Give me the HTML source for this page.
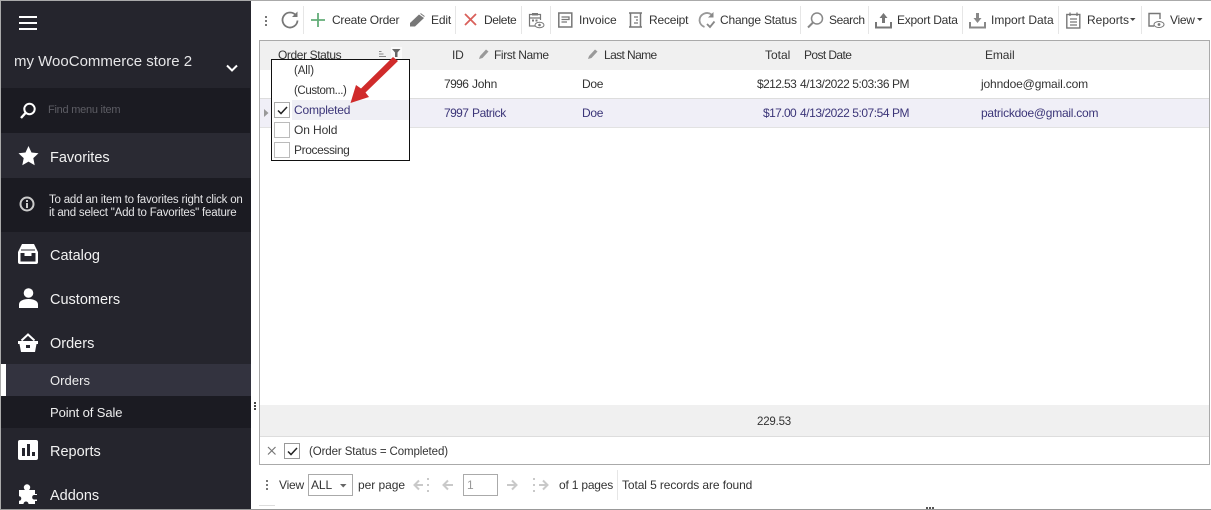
<!DOCTYPE html>
<html><head><meta charset="utf-8">
<style>
html,body{margin:0;padding:0;width:1211px;height:510px;overflow:hidden;background:#fff;font-family:"Liberation Sans",sans-serif}
#r{position:relative;width:1211px;height:510px;overflow:hidden;background:#fff}
.b{position:absolute}
.t{position:absolute;white-space:nowrap;font-size:12px;line-height:16px;color:#333;letter-spacing:-.2px}
.m{color:#f2f2f2;font-size:14.5px;line-height:20px;letter-spacing:0}
.v{color:#3b3578}
.h{letter-spacing:-.5px}
.n{letter-spacing:-.6px}
.d{letter-spacing:-.45px}
svg{position:absolute;overflow:visible}
</style></head><body><div id="r">
<!-- outer frame -->
<div class="b" style="left:0;top:0;width:1211px;height:1px;background:#aaa"></div>
<div class="b" style="left:0;top:0;width:1px;height:510px;background:#aaa"></div>
<div class="b" style="left:0;top:509px;width:1211px;height:1px;background:#999"></div>
<!-- sidebar -->
<div class="b" style="left:1px;top:1px;width:250px;height:508px;background:#25252d"></div>
<div class="b" style="left:1px;top:88px;width:249px;height:45px;background:#1b1b22"></div>
<div class="b" style="left:1px;top:133px;width:249px;height:45px;background:#2a2a33"></div>
<div class="b" style="left:1px;top:178px;width:250px;height:54px;background:#1b1b22"></div>
<div class="b" style="left:1px;top:364px;width:250px;height:32px;background:#33333f"></div>
<div class="b" style="left:1px;top:364px;width:5px;height:32px;background:#fff"></div>
<div class="b" style="left:1px;top:396px;width:250px;height:32px;background:#1b1b22"></div>
<!-- hamburger -->
<div class="b" style="left:19px;top:16px;width:18px;height:2px;background:#fff"></div>
<div class="b" style="left:19px;top:22px;width:18px;height:2px;background:#fff"></div>
<div class="b" style="left:19px;top:28px;width:18px;height:2px;background:#fff"></div>
<span class="t" style="left:14px;top:52px;font-size:15px;line-height:20px;color:#e6e6e8;letter-spacing:0">my WooCommerce store 2</span>
<svg style="left:226px;top:64px" width="12" height="9"><path d="M1 1.500L6 6.500L11 1.500" fill="none" stroke="#fff" stroke-width="2"/></svg>
<!-- search -->
<svg style="left:19px;top:101px" width="20" height="19"><circle cx="10.500" cy="8" r="5.200" fill="none" stroke="#fff" stroke-width="2"/><path d="M6.500 12L2 17" stroke="#fff" stroke-width="2.400"/></svg>
<span class="t" style="left:48px;top:102px;color:#5d5d64;font-size:11px;letter-spacing:-.25px">Find menu item</span>
<!-- favorites -->
<svg style="left:18px;top:146px" width="21" height="20"><path d="M10.500 0L13.500 6.500L20.500 7.300L15.300 12.100L16.700 19.200L10.500 15.600L4.300 19.200L5.700 12.100L.500 7.300L7.500 6.500Z" fill="#fff"/></svg>
<span class="t m" style="left:50px;top:148px">Favorites</span>
<svg style="left:19px;top:195px" width="17" height="17"><circle cx="8" cy="9" r="6.500" fill="none" stroke="#ccc" stroke-width="2"/><rect x="7" y="8" width="2" height="5" fill="#ccc"/><rect x="7" y="5" width="2" height="2" fill="#ccc"/></svg>
<span class="t" style="left:49px;top:192px;color:#e4e4e6;font-size:11.500px;letter-spacing:-.2px">To add an item to favorites right click on</span>
<span class="t" style="left:49px;top:205px;color:#e4e4e6;font-size:11.500px;letter-spacing:-.2px">it and select "Add to Favorites" feature</span>
<!-- catalog -->
<svg style="left:18px;top:244px" width="20" height="20"><path d="M4 0H16L19 6L20 8V18A2 2 0 0 1 18 20H2A2 2 0 0 1 0 18V8L1 6Z" fill="#fff"/><path d="M3 5.500H17V6.500H3Z" fill="#25252d"/><path d="M2.500 9H6.500V12H13.500V9H17.500V17.500H2.500Z" fill="#25252d"/></svg>
<span class="t m" style="left:50px;top:246px">Catalog</span>
<!-- customers -->
<svg style="left:19px;top:288px" width="19" height="20"><circle cx="9.500" cy="5" r="4.800" fill="#fff"/><path d="M0 20V16.500C0 13 4 11 9.500 11S19 13 19 16.500V20Z" fill="#fff"/></svg>
<span class="t m" style="left:50px;top:290px">Customers</span>
<!-- orders -->
<svg style="left:18px;top:333px" width="20" height="20"><path d="M3.500 7.500L10 1.500L16.500 7.500" fill="none" stroke="#fff" stroke-width="2"/><path d="M0 8H20V11H18.500L17 19H3L1.500 11H0Z" fill="#fff"/><rect x="8" y="12" width="4" height="3" fill="#25252d"/></svg>
<span class="t m" style="left:50px;top:334px">Orders</span>
<span class="t" style="left:50px;top:373px;color:#eee;font-size:13px;letter-spacing:.05px">Orders</span>
<span class="t" style="left:50px;top:405px;color:#eee;font-size:13px;letter-spacing:-.1px">Point of Sale</span>
<!-- reports -->
<svg style="left:18px;top:440px" width="20" height="20"><rect width="20" height="20" rx="2" fill="#fff"/><rect x="4" y="8" width="3" height="8" fill="#25252d"/><rect x="9" y="4" width="3" height="12" fill="#25252d"/><rect x="14" y="12" width="3" height="4" fill="#25252d"/></svg>
<span class="t m" style="left:50px;top:442px">Reports</span>
<!-- addons -->
<svg style="left:19px;top:484px" width="18" height="20"><circle cx="8" cy="3.500" r="3.200" fill="#fff"/><path d="M0 6H16V10H18V17H16V20H0Z" fill="#fff"/><path d="M18 11H15A2.300 2.300 0 0 0 15 15.500H18Z" fill="#25252d"/><circle cx="7" cy="20" r="2.500" fill="#25252d"/><circle cx="0" cy="14.500" r="2.300" fill="#25252d"/></svg>
<span class="t m" style="left:50px;top:486px">Addons</span>
<!-- splitter dots -->
<div class="b" style="left:254px;top:402px;width:2px;height:2px;background:#444;box-shadow:0 3px #444,0 6px #444"></div>
<!-- toolbar -->
<div class="b" style="left:265px;top:16px;width:2px;height:2px;background:#777;box-shadow:0 4px #777,0 8px #777"></div>
<svg style="left:281px;top:11px" width="18" height="18"><path d="M15 4.500A7.500 7.500 0 1 0 16.500 9.500" fill="none" stroke="#777" stroke-width="1.800"/><path d="M16.500 .5V6H11Z" fill="#777"/></svg>
<div class="b" style="left:303px;top:6px;width:1px;height:28px;background:#e6e6e6"></div>
<svg style="left:310px;top:12px" width="16" height="16"><path d="M8 1V15M1 8H15" stroke="#63ad78" stroke-width="1.800"/></svg>
<span class="t" style="left:332px;top:12px;letter-spacing:-.23px">Create Order</span>
<svg style="left:409px;top:12px" width="17" height="16"><path d="M1 11L10 2.500L15 6L6 14.500H1Z" fill="#777"/><path d="M11.500 1.500L15.500 4.500" stroke="#777" stroke-width="1"/></svg>
<span class="t" style="left:431px;top:12px;letter-spacing:-.15px">Edit</span>
<div class="b" style="left:455px;top:6px;width:1px;height:28px;background:#e6e6e6"></div>
<svg style="left:464px;top:13px" width="13" height="13"><path d="M1 1L12 12M12 1L1 12" stroke="#d9605a" stroke-width="1.800"/></svg>
<span class="t" style="left:484px;top:12px;letter-spacing:-.4px">Delete</span>
<div class="b" style="left:521px;top:6px;width:1px;height:28px;background:#e6e6e6"></div>
<svg style="left:528px;top:12px" width="17" height="17"><path d="M10 14H1.500V2.500H12.500V8M1.500 6H12.500" fill="none" stroke="#777" stroke-width="1.200"/><rect x="4" y="1" width="6" height="2.500" fill="#777"/><rect x="4" y="7.500" width="2" height="2" fill="#777"/><rect x="7.500" y="7.500" width="2" height="2" fill="#777"/><ellipse cx="11.500" cy="13" rx="4.500" ry="2.800" fill="#fff" stroke="#777"/><circle cx="11.500" cy="13" r="1.300" fill="#777"/></svg>
<div class="b" style="left:550px;top:6px;width:1px;height:28px;background:#e6e6e6"></div>
<svg style="left:558px;top:12px" width="15" height="16"><rect x=".8" y="1" width="13" height="14" fill="none" stroke="#777" stroke-width="1.500"/><path d="M3.500 5H11V7.500H3.500M3.500 10H9" fill="none" stroke="#777" stroke-width="1.300"/></svg>
<span class="t" style="left:579px;top:12px;letter-spacing:-.05px">Invoice</span>
<svg style="left:628px;top:12px" width="15" height="16"><path d="M1 1H14M1 15H14M2.500 1V15M12.500 1V15" fill="none" stroke="#777" stroke-width="1.500"/><path d="M6 5H10M8 8H10M6 11H10" stroke="#777" stroke-width="1.200"/></svg>
<span class="t" style="left:649px;top:12px;letter-spacing:-.2px">Receipt</span>
<svg style="left:698px;top:11px" width="18" height="18"><path d="M13.500 3.500A7.500 7.500 0 0 0 1.500 9.500A7.500 7.500 0 0 0 6.500 16" fill="none" stroke="#999" stroke-width="1.800"/><path d="M15.500 1V6.500H10Z" fill="#888"/><path d="M9 13L12 16L16.500 10.500" fill="none" stroke="#888" stroke-width="1.800"/></svg>
<span class="t" style="left:720px;top:12px;letter-spacing:-.2px">Change Status</span>
<div class="b" style="left:800px;top:6px;width:1px;height:28px;background:#e6e6e6"></div>
<svg style="left:807px;top:12px" width="17" height="17"><circle cx="10" cy="6.500" r="5.500" fill="none" stroke="#888" stroke-width="1.500"/><path d="M6 10.500L1 15.500" stroke="#888" stroke-width="2"/></svg>
<span class="t" style="left:829px;top:12px;letter-spacing:-.4px">Search</span>
<div class="b" style="left:868px;top:6px;width:1px;height:28px;background:#e6e6e6"></div>
<svg style="left:875px;top:12px" width="17" height="17"><path d="M1 10V15.500H16V10" fill="none" stroke="#777" stroke-width="2"/><path d="M8.500 1L12.500 6H10V11H7V6H4.500Z" fill="#777"/></svg>
<span class="t" style="left:897px;top:12px;letter-spacing:-.25px">Export Data</span>
<div class="b" style="left:962px;top:6px;width:1px;height:28px;background:#e6e6e6"></div>
<svg style="left:969px;top:12px" width="17" height="17"><path d="M1 10V15.500H16V10" fill="none" stroke="#888" stroke-width="2"/><path d="M8.500 11L12.500 6H10V1H7V6H4.500Z" fill="#888"/></svg>
<span class="t" style="left:991px;top:12px;letter-spacing:0">Import Data</span>
<div class="b" style="left:1058px;top:6px;width:1px;height:28px;background:#e6e6e6"></div>
<svg style="left:1066px;top:12px" width="15" height="17"><rect x=".8" y="2.500" width="13" height="13.500" fill="none" stroke="#777" stroke-width="1.400"/><path d="M4 .5V4M11 .5V4M4 7H11M4 10H11M4 13H11" stroke="#777" stroke-width="1.300"/></svg>
<span class="t" style="left:1087px;top:12px;letter-spacing:0">Reports</span>
<svg style="left:1130px;top:18px" width="6" height="4"><path d="M0 0H5.500L2.750 3Z" fill="#444"/></svg>
<div class="b" style="left:1141px;top:6px;width:1px;height:28px;background:#e6e6e6"></div>
<svg style="left:1148px;top:12px" width="17" height="17"><path d="M6 14H1V1.500H12V7" fill="none" stroke="#777" stroke-width="1.400"/><ellipse cx="11" cy="12.500" rx="5" ry="3" fill="#fff" stroke="#777"/><circle cx="11" cy="12.500" r="1.400" fill="#777"/></svg>
<span class="t" style="left:1170px;top:12px;letter-spacing:-.3px">View</span>
<svg style="left:1197px;top:18px" width="6" height="4"><path d="M0 0H5.500L2.750 3Z" fill="#444"/></svg>
<!-- grid -->
<div class="b" style="left:259px;top:40px;width:951px;height:425px;border:1px solid #aaa;box-sizing:border-box;background:#fff"></div>
<div class="b" style="left:260px;top:41px;width:949px;height:29px;background:#f0f0f0"></div>
<div class="b" style="left:260px;top:98px;width:949px;height:1px;background:#ddd"></div>
<div class="b" style="left:260px;top:99px;width:949px;height:28px;background:#f0eff7"></div>
<div class="b" style="left:260px;top:127px;width:949px;height:1px;background:#e2e2e2"></div>
<span class="t" style="left:278px;top:47px;letter-spacing:-.4px">Order Status</span>
<svg style="left:379px;top:51px" width="8" height="8"><path d="M0 .5H2.500M0 3H4.500M0 5.500H7" stroke="#888" stroke-width="1"/></svg>
<div class="b" style="left:391px;top:47px;width:11px;height:12px;background:#fafafa"></div>
<svg style="left:392px;top:49px" width="9" height="9"><path d="M0 0H8.500L5.500 3.500V8H3V3.500Z" fill="#666"/></svg>
<span class="t" style="left:452px;top:47px">ID</span>
<svg style="left:478px;top:48px" width="12" height="13"><path d="M1 11L2 8L8 1.500L10.500 3.500L4.500 10Z" fill="#999"/></svg>
<span class="t" style="left:494px;top:47px;letter-spacing:-.4px">First Name</span>
<svg style="left:587px;top:48px" width="12" height="13"><path d="M1 11L2 8L8 1.500L10.500 3.500L4.500 10Z" fill="#999"/></svg>
<span class="t h" style="left:604px;top:47px;letter-spacing:-.6px">Last Name</span>
<span class="t" style="left:765px;top:47px;letter-spacing:0">Total</span>
<span class="t h" style="left:804px;top:47px;letter-spacing:-.6px">Post Date</span>
<span class="t" style="left:985px;top:47px;letter-spacing:-.1px">Email</span>
<span class="t n" style="left:444px;top:76px">7996</span>
<span class="t" style="left:472px;top:76px;letter-spacing:-.25px">John</span>
<span class="t" style="left:582px;top:76px;letter-spacing:-.3px">Doe</span>
<span class="t n" style="left:757px;top:76px">$212.53</span>
<span class="t d" style="left:800px;top:76px">4/13/2022 5:03:36 PM</span>
<span class="t" style="left:981px;top:76px;letter-spacing:-.15px">johndoe@gmail.com</span>
<svg style="left:264px;top:109px" width="5" height="8"><path d="M0 0L4.500 4L0 8Z" fill="#999"/></svg>
<span class="t v n" style="left:444px;top:105px">7997</span>
<span class="t v" style="left:472px;top:105px;letter-spacing:-.4px">Patrick</span>
<span class="t v" style="left:582px;top:105px;letter-spacing:-.3px">Doe</span>
<span class="t v n" style="left:763px;top:105px">$17.00</span>
<span class="t v d" style="left:800px;top:105px">4/13/2022 5:07:54 PM</span>
<span class="t v" style="left:981px;top:105px;letter-spacing:-.25px">patrickdoe@gmail.com</span>
<!-- dropdown -->
<div class="b" style="left:271px;top:59px;width:139px;height:102px;box-sizing:border-box;border:1px solid #111;background:#fff"></div>
<div class="b" style="left:292px;top:100px;width:117px;height:20px;background:#efeff5"></div>
<span class="t" style="left:294px;top:63px;font-size:11.500px;letter-spacing:-.1px">(All)</span>
<span class="t" style="left:294px;top:83px;font-size:11.500px;letter-spacing:-.4px">(Custom...)</span>
<div class="b" style="left:274px;top:102px;width:16px;height:16px;box-sizing:border-box;border:1px solid #aaa;background:#fff"></div>
<svg style="left:277px;top:106px" width="11" height="9"><path d="M1 4.500L4 7.500L10 1" fill="none" stroke="#222" stroke-width="1.500"/></svg>
<span class="t v" style="left:294px;top:102px;letter-spacing:-.2px">Completed</span>
<div class="b" style="left:274px;top:122px;width:16px;height:16px;box-sizing:border-box;border:1px solid #bbb;background:#fff"></div>
<span class="t" style="left:294px;top:122px;letter-spacing:-.1px">On Hold</span>
<div class="b" style="left:274px;top:142px;width:16px;height:16px;box-sizing:border-box;border:1px solid #bbb;background:#fff"></div>
<span class="t" style="left:294px;top:142px;letter-spacing:-.4px">Processing</span>
<!-- arrow -->
<svg style="left:350px;top:55px" width="50" height="50"><path d="M43 2L48 6L15.500 37.500L19 42L.5 48L6 30L11 33.500Z" fill="#d02b2b"/></svg>
<!-- footer -->
<div class="b" style="left:260px;top:405px;width:949px;height:31px;background:#f0f0f0"></div>
<div class="b" style="left:260px;top:436px;width:949px;height:1px;background:#ddd"></div>
<span class="t" style="left:757px;top:414px;font-size:11.500px;letter-spacing:-.2px">229.53</span>
<svg style="left:267px;top:446px" width="10" height="10"><path d="M1 1L8.500 8.500M8.500 1L1 8.500" stroke="#777" stroke-width="1.200"/></svg>
<div class="b" style="left:284px;top:443px;width:16px;height:16px;box-sizing:border-box;border:1px solid #999;background:#fff"></div>
<svg style="left:287px;top:447px" width="11" height="9"><path d="M1 4.500L4 7.500L10 1" fill="none" stroke="#222" stroke-width="1.500"/></svg>
<span class="t" style="left:309px;top:444px;font-size:11.500px;letter-spacing:-.1px">(Order Status = Completed)</span>
<!-- pager -->
<div class="b" style="left:266px;top:480px;width:2px;height:2px;background:#777;box-shadow:0 4px #777,0 8px #777"></div>
<span class="t" style="left:279px;top:477px;letter-spacing:-.2px">View</span>
<div class="b" style="left:308px;top:474px;width:45px;height:22px;box-sizing:border-box;border:1px solid #aaa"></div>
<span class="t" style="left:311px;top:477px;letter-spacing:-.1px">ALL</span>
<svg style="left:340px;top:484px" width="7" height="4"><path d="M0 0H6.500L3.250 3.500Z" fill="#666"/></svg>
<span class="t" style="left:358px;top:477px;letter-spacing:-.05px">per page</span>
<svg style="left:413px;top:477px" width="18" height="16"><path d="M10 8H2M6 3.500L1.500 8L6 12.500" fill="none" stroke="#c9c9c9" stroke-width="2"/><path d="M15 1V3M15 7V9M15 13V15" stroke="#c9c9c9" stroke-width="2"/></svg>
<svg style="left:442px;top:479px" width="12" height="12"><path d="M11 6H2M6 1.500L1.500 6L6 10.500" fill="none" stroke="#c9c9c9" stroke-width="2"/></svg>
<div class="b" style="left:463px;top:474px;width:35px;height:22px;box-sizing:border-box;border:1px solid #aaa"></div>
<span class="t" style="left:467px;top:477px;color:#999">1</span>
<svg style="left:506px;top:479px" width="12" height="12"><path d="M1 6H10M6 1.500L10.500 6L6 10.500" fill="none" stroke="#c9c9c9" stroke-width="2"/></svg>
<svg style="left:531px;top:477px" width="18" height="16"><path d="M3 1V3M3 7V9M3 13V15" stroke="#c9c9c9" stroke-width="2"/><path d="M8 8H16M12 3.500L16.500 8L12 12.500" fill="none" stroke="#c9c9c9" stroke-width="2"/></svg>
<span class="t" style="left:559px;top:477px;letter-spacing:-.2px">of 1 pages</span>
<div class="b" style="left:617px;top:470px;width:1px;height:30px;background:#e6e6e6"></div>
<span class="t" style="left:622px;top:477px;letter-spacing:-.1px">Total 5 records are found</span>
<div class="b" style="left:926px;top:507px;width:2px;height:2px;background:#555;box-shadow:3px 0 #555,6px 0 #555"></div>
<div class="b" style="left:259px;top:505px;width:16px;height:1px;background:#ddd"></div>
</div></body></html>
